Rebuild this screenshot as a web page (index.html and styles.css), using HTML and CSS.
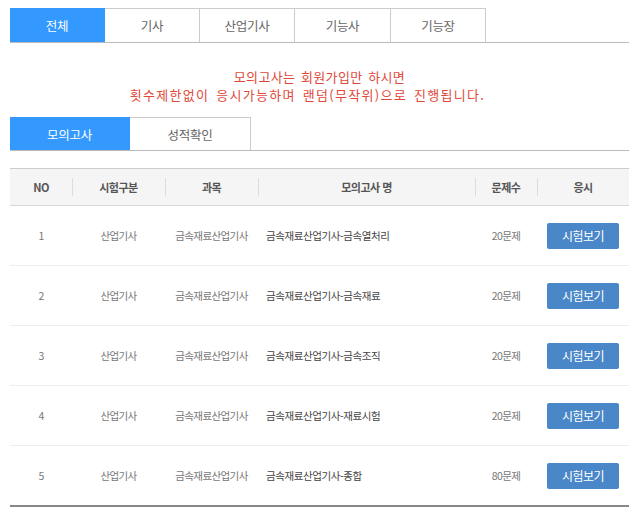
FILE: index.html
```html
<!DOCTYPE html>
<html lang="ko">

<head>
    <meta charset="UTF-8">
    <meta name="viewport" content="width=device-width, initial-scale=1.0">
    <title>모의고사</title>
    <link rel="stylesheet" href="styles.css">
</head>

<body>
    <div class="wrap">

        <ul class="tabs grade-tabs">
            <li class="on">전체</li>
            <li>기사</li>
            <li>산업기사</li>
            <li>기능사</li>
            <li>기능장</li>
        </ul>

        <p class="notice">
            <span>모의고사는 회원가입만 하시면</span>
            <span class="wide">횟수제한없이 응시가능하며 랜덤(무작위)으로 진행됩니다.</span>
        </p>

        <ul class="tabs sub-tabs">
            <li class="on">모의고사</li>
            <li>성적확인</li>
        </ul>

        <table class="exam-list">
            <colgroup>
                <col style="width: 62px">
                <col style="width: 93px">
                <col style="width: 93px">
                <col style="width: 217px">
                <col style="width: 62px">
                <col>
            </colgroup>
            <thead>
                <tr>
                    <th>NO</th>
                    <th>시험구분</th>
                    <th>과목</th>
                    <th>모의고사 명</th>
                    <th>문제수</th>
                    <th>응시</th>
                </tr>
            </thead>
            <tbody>
                <tr>
                    <td>1</td>
                    <td>산업기사</td>
                    <td>금속재료산업기사</td>
                    <td class="title">금속재료산업기사-금속열처리</td>
                    <td>20문제</td>
                    <td><button class="btn">시험보기</button></td>
                </tr>
                <tr>
                    <td>2</td>
                    <td>산업기사</td>
                    <td>금속재료산업기사</td>
                    <td class="title">금속재료산업기사-금속재료</td>
                    <td>20문제</td>
                    <td><button class="btn">시험보기</button></td>
                </tr>
                <tr>
                    <td>3</td>
                    <td>산업기사</td>
                    <td>금속재료산업기사</td>
                    <td class="title">금속재료산업기사-금속조직</td>
                    <td>20문제</td>
                    <td><button class="btn">시험보기</button></td>
                </tr>
                <tr>
                    <td>4</td>
                    <td>산업기사</td>
                    <td>금속재료산업기사</td>
                    <td class="title">금속재료산업기사-재료시험</td>
                    <td>20문제</td>
                    <td><button class="btn">시험보기</button></td>
                </tr>
                <tr>
                    <td>5</td>
                    <td>산업기사</td>
                    <td>금속재료산업기사</td>
                    <td class="title">금속재료산업기사-종합</td>
                    <td>80문제</td>
                    <td><button class="btn">시험보기</button></td>
                </tr>
            </tbody>
        </table>

    </div>
</body>

</html>
```

FILE: styles.css
```css
body {
    margin: 0;
    background-color: #fff;
    color: #555;
    font-family: 'Noto Sans CJK KR', 'Liberation Sans', sans-serif;
    font-size: 12px;
}

.wrap {
    width: 619px;
    margin-left: 10px;
    padding-top: 8px;
}

/* 탭 */
.tabs {
    display: flex;
    margin: 0;
    padding: 0;
    list-style: none;
    border-bottom: 1px solid #bbb;
}

.tabs li {
    display: flex;
    justify-content: center;
    align-items: center;
    height: 33px;
    border: 1px solid #ccc;
    border-bottom: none;
    border-left: none;
    color: #666;
    font-size: 12.5px;
    letter-spacing: -0.3px;
    box-sizing: border-box;
}

.tabs li.on {
    background-color: #3399ff;
    border-color: #3399ff;
    color: #fff;
}

.grade-tabs li {
    width: 95px;
    height: 34px;
}

.grade-tabs li:nth-child(4) {
    width: 96px;
}

.sub-tabs li {
    width: 120px;
}

.sub-tabs li:nth-child(2) {
    width: 121px;
}

/* 안내 문구 */
.notice {
    display: flex;
    flex-direction: column;
    align-items: center;
    margin: 25px 0 13px;
    color: #e0493a;
    font-size: 13px;
    line-height: 18px;
    letter-spacing: 0.3px;
    word-spacing: 2px;
}

.notice .wide {
    padding-right: 24px;
    letter-spacing: 1.3px;
}

/* 목록 */
.exam-list {
    width: 100%;
    margin-top: 17px;
    border-collapse: collapse;
    table-layout: fixed;
    border-top: 1px solid #ccc;
    border-bottom: 2px solid #888;
}

.exam-list th {
    position: relative;
    height: 36px;
    padding: 0;
    background-color: #f5f5f5;
    border-bottom: 1px solid #d8d8d8;
    color: #555;
    font-size: 11px;
    font-weight: bold;
    letter-spacing: -0.5px;
}

.exam-list th + th::before {
    content: "";
    position: absolute;
    left: 0;
    top: 9px;
    height: 18px;
    border-left: 1px solid #ddd;
}

.exam-list td {
    height: 59px;
    padding: 0;
    text-align: center;
    border-bottom: 1px solid #eee;
    color: #777;
    font-size: 10.5px;
    letter-spacing: -0.6px;
}

.exam-list tr:last-child td {
    border-bottom: none;
}

.exam-list td.title {
    padding-left: 8px;
    text-align: left;
    color: #444;
    letter-spacing: -0.4px;
}

.btn {
    width: 72px;
    height: 26px;
    padding: 0;
    background-color: #4a87c8;
    color: #fff;
    border: none;
    border-radius: 2px;
    font-family: inherit;
    font-size: 12px;
    letter-spacing: -0.5px;
    cursor: pointer;
}

.btn:hover {
    background-color: #3a74b2;
}
```
